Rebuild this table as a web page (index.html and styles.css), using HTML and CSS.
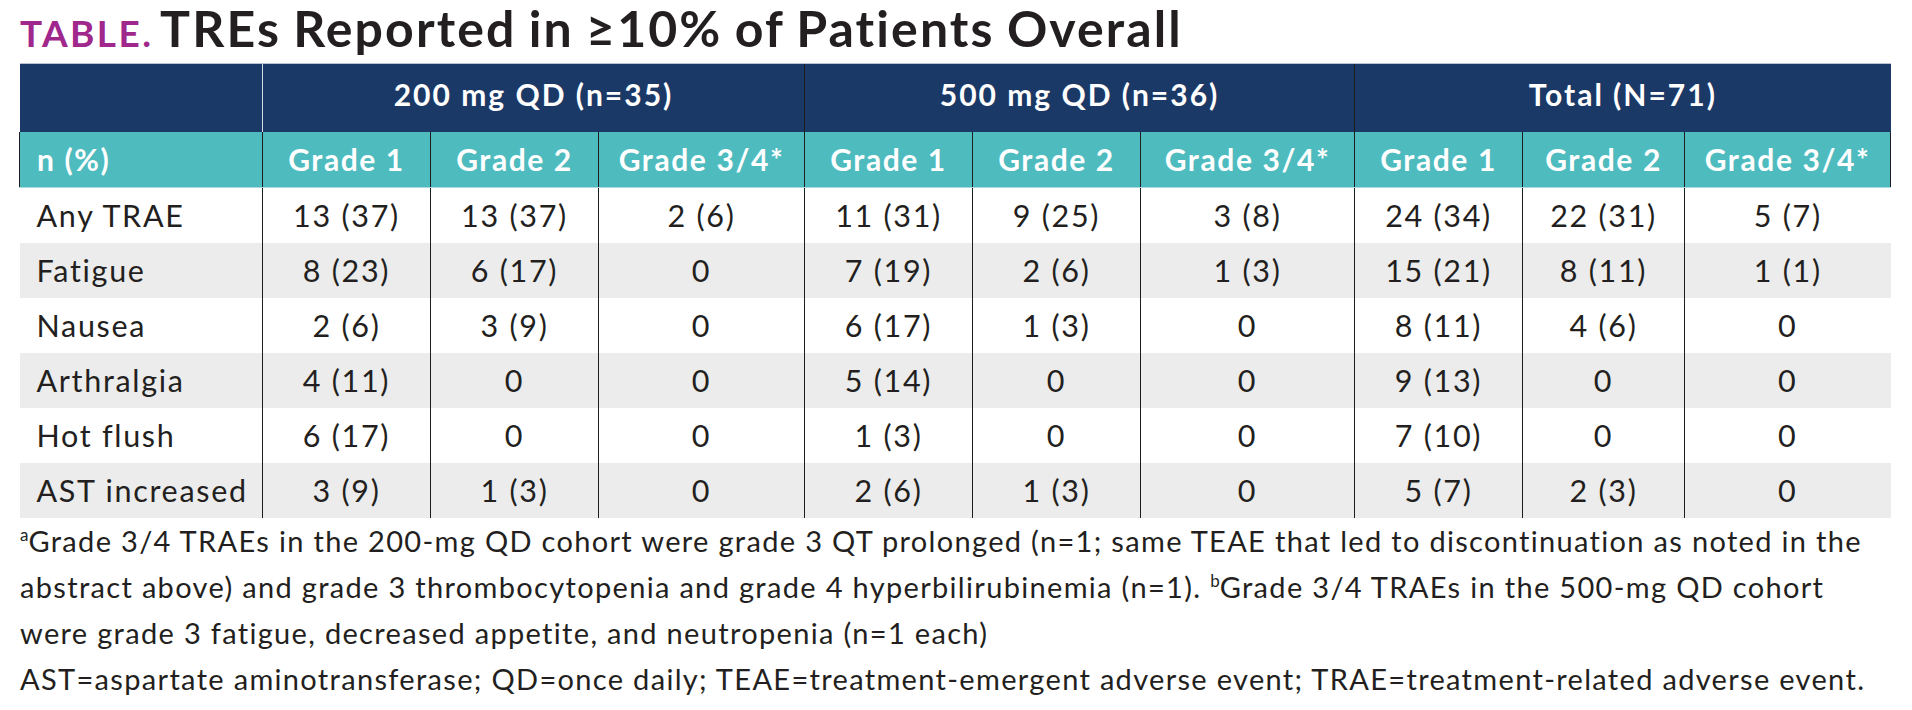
FILE: index.html
```html
<!DOCTYPE html>
<html lang="en">
<head>
<meta charset="utf-8">
<title>TABLE. TREs Reported in ≥10% of Patients Overall</title>
<link rel="stylesheet" href="styles.css">
</head>
<body>
<div class="page">
  <h1 class="title"><span class="tag">TABLE.</span> TREs Reported in ≥10% of Patients Overall</h1>
  <table class="trae">
    <colgroup>
      <col class="c-label">
      <col class="c-g1"><col class="c-g2"><col class="c-g3">
      <col class="c-g1"><col class="c-g2"><col class="c-g3b">
      <col class="c-g1"><col class="c-g2b"><col class="c-g3">
    </colgroup>
    <thead>
      <tr class="group">
        <th class="blank"></th>
        <th colspan="3" class="first-group">200 mg QD (n=35)</th>
        <th colspan="3">500 mg QD (n=36)</th>
        <th colspan="3">Total (N=71)</th>
      </tr>
      <tr class="grades">
        <th class="label">n (%)</th>
        <th>Grade 1</th><th>Grade 2</th><th>Grade 3/4*</th>
        <th>Grade 1</th><th>Grade 2</th><th>Grade 3/4*</th>
        <th>Grade 1</th><th>Grade 2</th><th class="last">Grade 3/4*</th>
      </tr>
    </thead>
    <tbody>
      <tr><td class="label">Any TRAE</td><td>13 (37)</td><td>13 (37)</td><td>2 (6)</td><td>11 (31)</td><td>9 (25)</td><td>3 (8)</td><td>24 (34)</td><td>22 (31)</td><td>5 (7)</td></tr>
      <tr class="alt"><td class="label">Fatigue</td><td>8 (23)</td><td>6 (17)</td><td>0</td><td>7 (19)</td><td>2 (6)</td><td>1 (3)</td><td>15 (21)</td><td>8 (11)</td><td>1 (1)</td></tr>
      <tr><td class="label">Nausea</td><td>2 (6)</td><td>3 (9)</td><td>0</td><td>6 (17)</td><td>1 (3)</td><td>0</td><td>8 (11)</td><td>4 (6)</td><td>0</td></tr>
      <tr class="alt"><td class="label">Arthralgia</td><td>4 (11)</td><td>0</td><td>0</td><td>5 (14)</td><td>0</td><td>0</td><td>9 (13)</td><td>0</td><td>0</td></tr>
      <tr><td class="label">Hot flush</td><td>6 (17)</td><td>0</td><td>0</td><td>1 (3)</td><td>0</td><td>0</td><td>7 (10)</td><td>0</td><td>0</td></tr>
      <tr class="alt"><td class="label">AST increased</td><td>3 (9)</td><td>1 (3)</td><td>0</td><td>2 (6)</td><td>1 (3)</td><td>0</td><td>5 (7)</td><td>2 (3)</td><td>0</td></tr>
    </tbody>
  </table>
  <div class="notes">
    <p><sup>a</sup>Grade 3/4 TRAEs in the 200-mg QD cohort were grade 3 QT prolonged (n=1; same TEAE that led to discontinuation as noted in the<br>abstract above) and grade 3 thrombocytopenia and grade 4 hyperbilirubinemia (n=1). <sup>b</sup>Grade 3/4 TRAEs in the 500-mg QD cohort<br>were grade 3 fatigue, decreased appetite, and neutropenia (n=1 each)</p>
    <p>AST=aspartate aminotransferase; QD=once daily; TEAE=treatment-emergent adverse event; TRAE=treatment-related adverse event.</p>
  </div>
</div>
</body>
</html>
```

FILE: styles.css
```css
html, body {
  margin: 0;
  padding: 0;
  background: #ffffff;
}

body {
  font-family: Lato, "Open Sans", sans-serif;
  color: #231f20;
}

.page {
  padding: 0 21px 0 19px;
}

.title {
  margin: 0 0 6px 0;
  padding-left: 1px;
  font-size: 50px;
  line-height: 57px;
  font-weight: 700;
  color: #231f20;
  letter-spacing: 2.1px;
  word-spacing: -2px;
  white-space: nowrap;
}

.title .tag {
  font-size: 37px;
  line-height: 1;
  color: #a0278c;
  letter-spacing: 2.4px;
  margin-right: -4px;
}

.trae {
  width: 1872px;
  border-collapse: collapse;
  table-layout: fixed;
}

.c-label { width: 243px; }
.c-g1 { width: 168px; }
.c-g2 { width: 168px; }
.c-g3 { width: 206px; }
.c-g3b { width: 214px; }
.c-g2b { width: 162px; }

.trae th {
  color: #ffffff;
  font-weight: 700;
  font-size: 30px;
  letter-spacing: 1.6px;
  padding: 0;
  text-align: center;
  white-space: nowrap;
}

.group th {
  background: #1b3967;
  height: 68px;
  padding-bottom: 8px;
  box-sizing: border-box;
  border-left: 1px solid #1d1d1f;
  border-top: 1px solid #b9c3d2;
  letter-spacing: 2px;
}

.group th.blank {
  border-left: none;
}

.group th.first-group {
  border-left: 1px solid #d6dce6;
}

.grades th {
  background: #4ebbbf;
  height: 55px;
  border-left: 1px solid #1d1d1f;
  border-bottom: 1px solid #a9dcde;
}

.grades th.last {
  border-right: 1px solid #1d1d1f;
}

.grades th.label {
  text-align: left;
  padding-left: 17px;
}

.trae td {
  height: 55px;
  padding: 0;
  font-size: 30.5px;
  letter-spacing: 1.7px;
  text-align: center;
  border-left: 1px solid #1d1d1f;
  white-space: nowrap;
}

.trae td.label {
  text-align: left;
  padding-left: 17px;
  border-left: none;
}

.trae tr.alt td {
  background: #ebeceb;
}

.notes {
  padding-left: 1px;
}

.notes p {
  margin: 0;
  font-size: 29px;
  line-height: 46px;
  letter-spacing: 1.32px;
  white-space: nowrap;
}

.notes sup {
  font-size: 17px;
  line-height: 0;
  vertical-align: 11px;
  letter-spacing: 0;
}
```
